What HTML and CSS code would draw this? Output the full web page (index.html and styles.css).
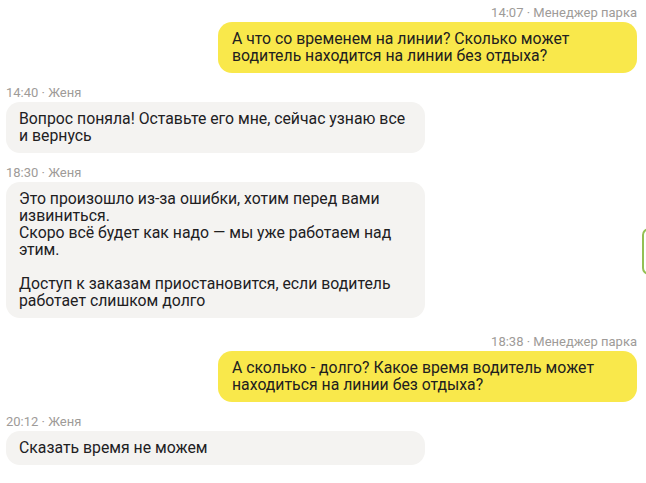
FILE: index.html
```html
<!DOCTYPE html>
<html lang="ru">

<head>
    <meta charset="UTF-8">
    <meta name="viewport" content="width=device-width, initial-scale=1.0">
    <title>Чат</title>
    <link rel="stylesheet" href="styles.css">
</head>

<body>
    <div class="chat">
        <div class="message out">
            <div class="meta">14:07 · Менеджер парка</div>
            <div class="bubble">А что со временем на линии? Сколько может водитель находится на линии без отдыха?</div>
        </div>

        <div class="message in">
            <div class="meta">14:40 · Женя</div>
            <div class="bubble">Вопрос поняла! Оставьте его мне, сейчас узнаю все и вернусь</div>
        </div>

        <div class="message in">
            <div class="meta">18:30 · Женя</div>
            <div class="bubble">Это произошло из-за ошибки, хотим перед вами извиниться.
Скоро всё будет как надо — мы уже работаем над этим.

Доступ к заказам приостановится, если водитель работает слишком долго</div>
        </div>

        <div class="message out">
            <div class="meta">18:38 · Менеджер парка</div>
            <div class="bubble">А сколько - долго? Какое время водитель может находиться на линии без отдыха?</div>
        </div>

        <div class="message in">
            <div class="meta">20:12 · Женя</div>
            <div class="bubble">Сказать время не можем</div>
        </div>
    </div>

    <div class="side-tab"></div>
</body>

</html>
```
FILE: styles.css
```css
* {
    padding: 0;
    margin: 0;
    box-sizing: border-box;
}

body {
    font-family: Roboto, "Liberation Sans", sans-serif;
    color: #21201f;
    background-color: #fff;
    overflow: hidden;
}

.chat {
    display: flex;
    flex-direction: column;
    padding: 5px 9px 0 6px;
}

.message {
    display: flex;
    flex-direction: column;
    margin-top: 12px;
}

.message:first-child {
    margin-top: 0;
}

.message.out {
    align-items: flex-end;
}

.message.out + .message.out,
.message.in + .message.out {
    margin-top: 16px;
}

.message.in {
    align-items: flex-start;
}

.meta {
    font-size: 13px;
    line-height: 16px;
    color: #9e9b98;
    margin-bottom: 1px;
}

.bubble {
    width: 419px;
    padding: 8px 13px 9px;
    border-radius: 14px;
    font-size: 15.8px;
    line-height: 17px;
    white-space: pre-line;
}

.message.out .bubble {
    background-color: #f9e84b;
    padding-left: 14px;
}

.message.in .bubble {
    background-color: #f4f3f1;
}

/* floating tab at the right edge */

.side-tab {
    position: absolute;
    top: 228px;
    left: 642px;
    width: 24px;
    height: 47px;
    border: 2px solid #93c054;
    border-radius: 7px;
    background-color: #fff;
}
```
